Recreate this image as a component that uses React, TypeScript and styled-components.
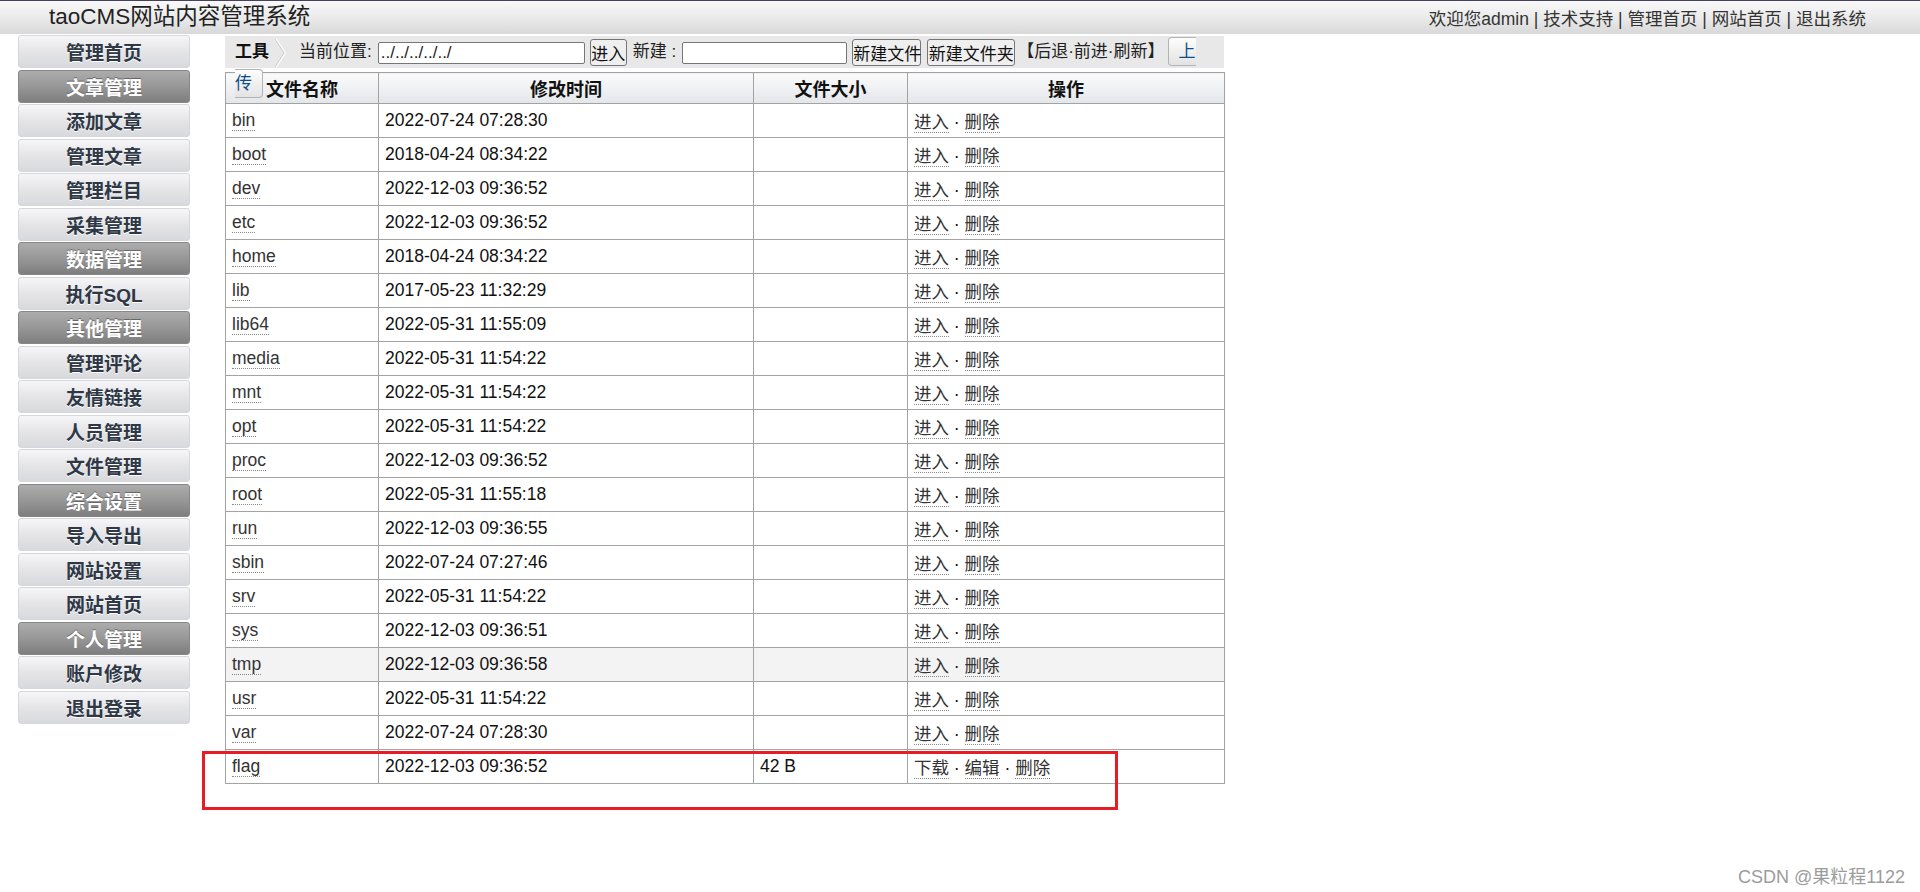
import styled, { createGlobalStyle } from "styled-components";

const GlobalStyle = createGlobalStyle`
  html, body {
    margin: 0;
    padding: 0;
    background: #fff;
  }
  body {
    font-family: "Liberation Sans", Arial, "Noto Sans CJK SC", sans-serif;
    color: #333;
  }
`;

const Page = styled.div`
  position: relative;
  width: 1920px;
  height: 892px;
  overflow: hidden;
`;

const TopBar = styled.header`
  display: flex;
  align-items: center;
  justify-content: space-between;
  height: 33px;
  border-top: 1px solid #46415f;
  padding: 0 54px 0 49px;
  background: linear-gradient(#f9f9f9, #e9e9e9 55%, #d8d8d8);
`;

const Title = styled.h1`
  margin: 0;
  font-size: 22.5px;
  font-weight: normal;
  color: #222;
  line-height: 1;
`;

const UserNav = styled.nav`
  font-size: 17.5px;
  color: #333;
`;

const NavLink = styled.a`
  color: #333;
  text-decoration: none;
`;

const Body = styled.div`
  display: flex;
  align-items: flex-start;
`;

const Sidebar = styled.nav`
  display: flex;
  flex-direction: column;
  gap: 1.5px;
  width: 172px;
  margin: 1px 0 0 18px;
`;

const MenuItem = styled.a<{ $head?: boolean }>`
  display: flex;
  align-items: center;
  justify-content: center;
  box-sizing: border-box;
  height: 33px;
  border: 1px solid ${(p) => (p.$head ? "#878787" : "#d5d7db")};
  border-radius: 3px;
  background: ${(p) =>
    p.$head
      ? "linear-gradient(#acacac, #979797 50%, #7e7e7e)"
      : "linear-gradient(#f6f6f8, #e5e5e7 50%, #d8d9dd)"};
  color: ${(p) => (p.$head ? "#fff" : "#2e3846")};
  text-shadow: ${(p) => (p.$head ? "0 -1px 0 #666" : "0 1px 0 #fff")};
  font-size: 19px;
  font-weight: bold;
  text-decoration: none;
`;

const Main = styled.main`
  width: 999px;
  margin: 2px 0 0 35px;
`;

const Toolbar = styled.div`
  box-sizing: border-box;
  height: 32px;
  line-height: 32px;
  padding-left: 10px;
  background: #e8e8e8;
  font-size: 17px;
  color: #222;
  white-space: nowrap;
`;

const ToolTitle = styled.b`
  color: #111;
`;

const Chevron = styled.svg`
  vertical-align: middle;
  margin: 0 12px 0 6px;
`;

const Gap = styled.span<{ $w: number }>`
  margin-left: ${(p) => p.$w}px;
`;

const TextInput = styled.input<{ $w: number }>`
  box-sizing: border-box;
  width: ${(p) => p.$w}px;
  height: 22px;
  padding: 0 2px;
  border: 1px solid #767676;
  border-radius: 2px;
  background: #fff;
  font-family: inherit;
  font-size: 17px;
  color: #222;
  vertical-align: middle;
`;

const Button = styled.button<{ $w: number }>`
  box-sizing: border-box;
  width: ${(p) => p.$w}px;
  height: 27px;
  padding: 0;
  border: 1px solid #767676;
  border-radius: 3px;
  background: #efefef;
  font-family: inherit;
  font-size: 17px;
  color: #111;
  vertical-align: middle;
`;

const UploadLink = styled.a`
  position: relative;
  z-index: 1;
  padding: 4px 10px;
  border: 1px solid #b3b3b3;
  border-radius: 4px;
  background: linear-gradient(#fdfdfd, #e3e3e3);
  color: #0d4c8a;
  text-decoration: none;
`;

const FileTable = styled.table`
  width: 999px;
  margin-top: 4px;
  border-collapse: collapse;
  table-layout: fixed;
  font-size: 17.5px;
  color: #111;
`;

const HeadCell = styled.th`
  height: 30px;
  padding: 0;
  border: 1px solid #a3a3a3;
  background: linear-gradient(#fbfbfc, #e3e6ea);
  font-size: 18px;
  font-weight: bold;
  color: #111;
  text-align: center;
`;

const Row = styled.tr<{ $hover?: boolean }>`
  height: 34px;
  background: ${(p) => (p.$hover ? "#f3f3f3" : "#fff")};
`;

const Cell = styled.td`
  padding: 0 6px;
  border: 1px solid #a3a3a3;
  vertical-align: middle;
  white-space: nowrap;
`;

const FileLink = styled.a`
  color: #333;
  text-decoration: none;
  border-bottom: 1px dotted #888;
`;

const Marker = styled.div`
  position: absolute;
  left: 202px;
  top: 751px;
  box-sizing: border-box;
  width: 916px;
  height: 59px;
  border: 3px solid #e81c24;
`;

const Watermark = styled.div`
  position: absolute;
  right: 15px;
  top: 862px;
  font-size: 18px;
  color: #9c9c9c;
`;

const menu: [string, boolean][] = [
  ["管理首页", false],
  ["文章管理", true],
  ["添加文章", false],
  ["管理文章", false],
  ["管理栏目", false],
  ["采集管理", false],
  ["数据管理", true],
  ["执行SQL", false],
  ["其他管理", true],
  ["管理评论", false],
  ["友情链接", false],
  ["人员管理", false],
  ["文件管理", false],
  ["综合设置", true],
  ["导入导出", false],
  ["网站设置", false],
  ["网站首页", false],
  ["个人管理", true],
  ["账户修改", false],
  ["退出登录", false],
];

const dirs: [string, string][] = [
  ["bin", "2022-07-24 07:28:30"],
  ["boot", "2018-04-24 08:34:22"],
  ["dev", "2022-12-03 09:36:52"],
  ["etc", "2022-12-03 09:36:52"],
  ["home", "2018-04-24 08:34:22"],
  ["lib", "2017-05-23 11:32:29"],
  ["lib64", "2022-05-31 11:55:09"],
  ["media", "2022-05-31 11:54:22"],
  ["mnt", "2022-05-31 11:54:22"],
  ["opt", "2022-05-31 11:54:22"],
  ["proc", "2022-12-03 09:36:52"],
  ["root", "2022-05-31 11:55:18"],
  ["run", "2022-12-03 09:36:55"],
  ["sbin", "2022-07-24 07:27:46"],
  ["srv", "2022-05-31 11:54:22"],
  ["sys", "2022-12-03 09:36:51"],
  ["tmp", "2022-12-03 09:36:58"],
  ["usr", "2022-05-31 11:54:22"],
  ["var", "2022-07-24 07:28:30"],
];

function App() {
  return (
    <Page>
      <GlobalStyle />
      <TopBar>
        <Title>taoCMS网站内容管理系统</Title>
        <UserNav>
          欢迎您admin | <NavLink>技术支持</NavLink> | <NavLink>管理首页</NavLink> |{" "}
          <NavLink>网站首页</NavLink> | <NavLink>退出系统</NavLink>
        </UserNav>
      </TopBar>
      <Body>
        <Sidebar>
          {menu.map(([label, head]) => (
            <MenuItem key={label} $head={head}>
              {label}
            </MenuItem>
          ))}
        </Sidebar>
        <Main>
          <Toolbar>
            <ToolTitle>工具</ToolTitle>
            <Chevron width="12" height="28" viewBox="0 0 12 28">
              <polyline points="1,0 10,14 1,28" fill="none" stroke="#fafafa" strokeWidth="2" />
              <polyline points="0,0 9,14 0,28" fill="none" stroke="#c9c9c9" strokeWidth="1" />
            </Chevron>
            当前位置:
            <Gap $w={6} />
            <TextInput $w={207} defaultValue="../../../../../" />
            <Gap $w={5} />
            <Button $w={37}>进入</Button>
            <Gap $w={6} />
            新建 :
            <Gap $w={6} />
            <TextInput $w={165} />
            <Gap $w={5} />
            <Button $w={69}>新建文件</Button>
            <Gap $w={6} />
            <Button $w={88}>新建文件夹</Button>
            <Gap $w={2} />
            【后退·前进·刷新】
            <Gap $w={3} />
            <UploadLink>
              上<br />传
            </UploadLink>
          </Toolbar>
          <FileTable>
            <colgroup>
              <col style={{ width: 153 }} />
              <col style={{ width: 375 }} />
              <col style={{ width: 154 }} />
              <col style={{ width: 317 }} />
            </colgroup>
            <thead>
              <tr>
                <HeadCell>文件名称</HeadCell>
                <HeadCell>修改时间</HeadCell>
                <HeadCell>文件大小</HeadCell>
                <HeadCell>操作</HeadCell>
              </tr>
            </thead>
            <tbody>
              {dirs.map(([name, time]) => (
                <Row key={name} $hover={name === "tmp"}>
                  <Cell>
                    <FileLink>{name}</FileLink>
                  </Cell>
                  <Cell>{time}</Cell>
                  <Cell />
                  <Cell>
                    <FileLink>进入</FileLink> · <FileLink>删除</FileLink>
                  </Cell>
                </Row>
              ))}
              <Row>
                <Cell>
                  <FileLink>flag</FileLink>
                </Cell>
                <Cell>2022-12-03 09:36:52</Cell>
                <Cell>42 B</Cell>
                <Cell>
                  <FileLink>下载</FileLink> · <FileLink>编辑</FileLink> ·{" "}
                  <FileLink>删除</FileLink>
                </Cell>
              </Row>
            </tbody>
          </FileTable>
        </Main>
      </Body>
      <Marker />
      <Watermark>CSDN @果粒程1122</Watermark>
    </Page>
  );
}

export default App;
